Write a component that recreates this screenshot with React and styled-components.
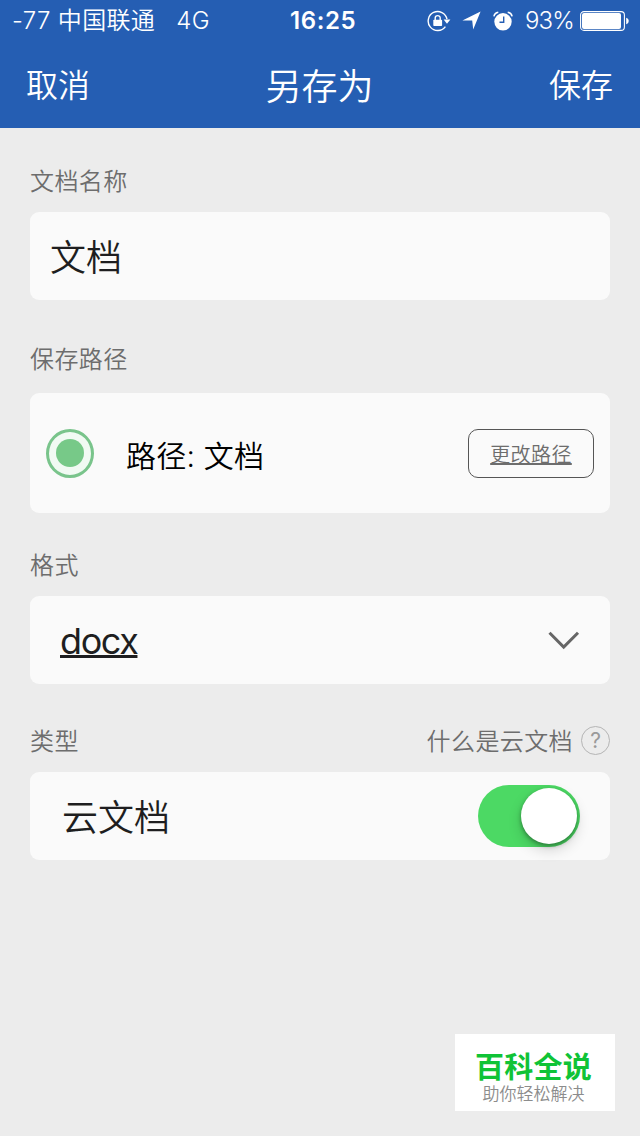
import React, { useState } from 'react';
import styled, { createGlobalStyle } from 'styled-components';

const GlobalStyle = createGlobalStyle`
  * {
    box-sizing: border-box;
  }

  body {
    margin: 0;
    background: #ececec;
    font-family: Inter, "Noto Sans CJK SC", sans-serif;
  }

  button {
    font-family: inherit;
    background: none;
    border: none;
    padding: 0;
    cursor: pointer;
  }
`;

const Screen = styled.div`
  width: 640px;
  height: 1136px;
  display: flex;
  flex-direction: column;
  background: #ececec;
`;

const StatusBar = styled.div`
  height: 40px;
  display: grid;
  grid-template-columns: 278px 1fr auto;
  align-items: center;
  padding: 0 11px 0 12px;
  background: #255eb3;
  color: #fff;
  font-size: 24px;
  line-height: 40px;
  white-space: nowrap;
`;

const Carrier = styled.div`
  display: flex;
  gap: 21px;
  padding-top: 1px;
  font-weight: 350;
  letter-spacing: 0.35px;
`;

const Clock = styled.div`
  padding-top: 1px;
  font-size: 24px;
  font-weight: 600;
  letter-spacing: 0.6px;
`;

const StatusIcons = styled.div`
  display: flex;
  align-items: center;

  svg {
    display: block;
  }
`;

const BatteryText = styled.span`
  margin: 0 6px 0 12px;
  padding-top: 1px;
  font-weight: 350;
  letter-spacing: -0.8px;
`;

const NavBar = styled.header`
  height: 88px;
  display: grid;
  grid-template-columns: 1fr auto 1fr;
  align-items: center;
  padding: 4px 27px 0 26px;
  background: #255eb3;
  color: #fff;
`;

const NavTitle = styled.h1`
  margin: 0;
  padding-top: 1px;
  font-size: 36px;
  font-weight: 350;
  line-height: 48px;
`;

const NavButton = styled.button`
  justify-self: ${props => props.$align};
  color: #fff;
  font-size: 32px;
  font-weight: 350;
  line-height: 44px;
`;

const Form = styled.main`
  flex: 1;
  padding: 36px 30px 0;
`;

const Section = styled.section`
  margin-bottom: ${props => props.$gap || 0}px;
`;

const LabelRow = styled.div`
  display: flex;
  align-items: center;
  justify-content: space-between;
  height: 32px;
  margin-bottom: ${props => props.$space || 16}px;
`;

const Label = styled.span`
  padding-top: 4px;
  color: #6d6d6d;
  font-size: 24px;
  font-weight: 350;
  line-height: 32px;
  letter-spacing: 0.4px;
`;

const HelpLink = styled.div`
  display: flex;
  align-items: center;
  gap: 8px;
`;

const HelpBadge = styled.span`
  width: 29px;
  height: 29px;
  border: 1.5px solid #b5b5b5;
  border-radius: 50%;
  color: #9a9a9a;
  font-size: 21px;
  line-height: 27px;
  text-align: center;
`;

const Card = styled.div`
  display: flex;
  align-items: center;
  justify-content: space-between;
  height: ${props => props.$height || 88}px;
  padding: ${props => props.$padding};
  border-radius: 9px;
  background: #fafafa;
`;

const Value = styled.span`
  padding-top: 4px;
  color: #1e1e20;
  font-size: 36px;
  font-weight: 350;
  line-height: 48px;
`;

const Format = styled.span`
  padding-top: 1px;
  color: #1e1e20;
  font-size: 36px;
  line-height: 48px;
  letter-spacing: -1.4px;
  text-decoration: underline;
  text-decoration-thickness: 3px;
  text-decoration-skip-ink: none;
  text-underline-offset: 1px;
`;

const PathOption = styled.div`
  display: flex;
  align-items: center;
  gap: 32px;
`;

const Radio = styled.span`
  width: 48px;
  height: 49px;
  display: flex;
  align-items: center;
  justify-content: center;
  border: 3px solid #79c48b;
  border-radius: 50%;
  background: #f1faf3;

  &::after {
    content: '';
    width: 28px;
    height: 28px;
    border-radius: 50%;
    background: #77c988;
  }
`;

const PathText = styled.span`
  padding-top: 5px;
  color: #000;
  font-size: 30px;
  font-weight: 350;
  line-height: 40px;
  letter-spacing: 0.2px;
`;

const OutlineButton = styled.button`
  width: 126px;
  height: 49px;
  border: 1px solid #555;
  border-radius: 10px;
  color: #6d6d6d;
  font-size: 20px;
  font-weight: 350;
  letter-spacing: 0.4px;

  span {
    text-decoration: underline;
    text-decoration-thickness: 2px;
    text-decoration-skip-ink: none;
    text-underline-offset: 1px;
  }
`;

const Switch = styled.button`
  width: 102px;
  height: 62px;
  display: flex;
  align-items: center;
  justify-content: ${props => (props.$on ? 'flex-end' : 'flex-start')};
  padding: 0 3px;
  border-radius: 31px;
  background: ${props => (props.$on ? '#4cd964' : '#e5e5e5')};
`;

const Knob = styled.span`
  width: 56px;
  height: 56px;
  border-radius: 50%;
  background: #fff;
  box-shadow: 0 6px 14px rgba(0, 0, 0, 0.16), 0 2px 4px rgba(0, 0, 0, 0.35);
`;

const Watermark = styled.footer`
  align-self: flex-end;
  width: 160px;
  height: 77px;
  margin: 0 25px 25px 0;
  padding: 17px 3px 0 0;
  background: #fff;
  text-align: center;
`;

const WatermarkName = styled.div`
  color: #0fc336;
  font-size: 29px;
  font-weight: 700;
  line-height: 33px;
  letter-spacing: 0.3px;
`;

const WatermarkText = styled.div`
  color: #8c8c8c;
  font-size: 17px;
  font-weight: 350;
  line-height: 20px;
`;

const RotationLockIcon = () => (
  <svg width="24" height="22" viewBox="0 0 24 22" fill="none">
    <path d="M18.4 16.6A9.5 9.5 0 1 1 20 9.2" stroke="#fff" strokeWidth="1.4" />
    <path d="M16.6 9.4h6.8L20 13.8z" fill="#fff" />
    <rect x="6.3" y="9.8" width="8.8" height="6.2" rx="0.8" fill="#fff" />
    <path d="M8.2 10V8.1a2.5 2.5 0 0 1 5 0V10" stroke="#fff" strokeWidth="1.4" />
  </svg>
);

const LocationIcon = () => (
  <svg width="19" height="19" viewBox="0 0 19 19" style={{ marginLeft: 11 }}>
    <path d="M18.6 0.4L11.2 18.6 10.2 9.6 0.4 9.4z" fill="#fff" />
  </svg>
);

const AlarmIcon = () => (
  <svg width="20" height="20" viewBox="0 0 20 20" fill="none" style={{ marginLeft: 12 }}>
    <circle cx="10" cy="10.8" r="8.7" fill="#fff" />
    <path d="M10.7 5.6v5.7H6.5" stroke="#255eb3" strokeWidth="1.4" />
    <path d="M0.9 5.3C1.3 3.2 3 1.6 5.3 1.2M14.7 1.2c2.3.4 4 2 4.4 4.1" stroke="#fff" strokeWidth="1.6" />
  </svg>
);

const BatteryIcon = () => (
  <svg width="49" height="20" viewBox="0 0 49 20" fill="none">
    <rect x="0.6" y="0.6" width="43.8" height="18.8" rx="3.4" stroke="#fff" strokeWidth="1.1" />
    <rect x="2" y="2" width="39" height="16" rx="2" fill="#fff" />
    <path d="M46.2 6.8c1.6.6 2.5 1.8 2.5 3.2s-.9 2.6-2.5 3.2z" fill="#fff" />
  </svg>
);

const ChevronIcon = () => (
  <svg width="32" height="20" viewBox="0 0 32 20" fill="none">
    <path d="M1.5 2.7L15.7 17.1 30 2.7" stroke="#666" strokeWidth="3" />
  </svg>
);

const App = () => {
  const [cloud, setCloud] = useState(true);

  return (
    <>
      <GlobalStyle />
      <Screen>
        <StatusBar>
          <Carrier>
            <span>-77 中国联通</span>
            <span>4G</span>
          </Carrier>
          <Clock>16:25</Clock>
          <StatusIcons>
            <RotationLockIcon />
            <LocationIcon />
            <AlarmIcon />
            <BatteryText>93%</BatteryText>
            <BatteryIcon />
          </StatusIcons>
        </StatusBar>

        <NavBar>
          <NavButton $align="start">取消</NavButton>
          <NavTitle>另存为</NavTitle>
          <NavButton $align="end">保存</NavButton>
        </NavBar>

        <Form>
          <Section $gap={42}>
            <LabelRow>
              <Label>文档名称</Label>
            </LabelRow>
            <Card $padding="0 20px">
              <Value>文档</Value>
            </Card>
          </Section>

          <Section $gap={35}>
            <LabelRow $space={19}>
              <Label>保存路径</Label>
            </LabelRow>
            <Card $height={120} $padding="0 16px">
              <PathOption>
                <Radio />
                <PathText>路径: 文档</PathText>
              </PathOption>
              <OutlineButton>
                <span>更改路径</span>
              </OutlineButton>
            </Card>
          </Section>

          <Section $gap={40}>
            <LabelRow>
              <Label>格式</Label>
            </LabelRow>
            <Card $padding="0 30px">
              <Format>docx</Format>
              <ChevronIcon />
            </Card>
          </Section>

          <Section>
            <LabelRow>
              <Label>类型</Label>
              <HelpLink>
                <Label>什么是云文档</Label>
                <HelpBadge>?</HelpBadge>
              </HelpLink>
            </LabelRow>
            <Card $padding="0 30px 0 32px">
              <Value>云文档</Value>
              <Switch $on={cloud} onClick={() => setCloud(!cloud)}>
                <Knob />
              </Switch>
            </Card>
          </Section>
        </Form>

        <Watermark>
          <WatermarkName>百科全说</WatermarkName>
          <WatermarkText>助你轻松解决</WatermarkText>
        </Watermark>
      </Screen>
    </>
  );
};

export default App;
